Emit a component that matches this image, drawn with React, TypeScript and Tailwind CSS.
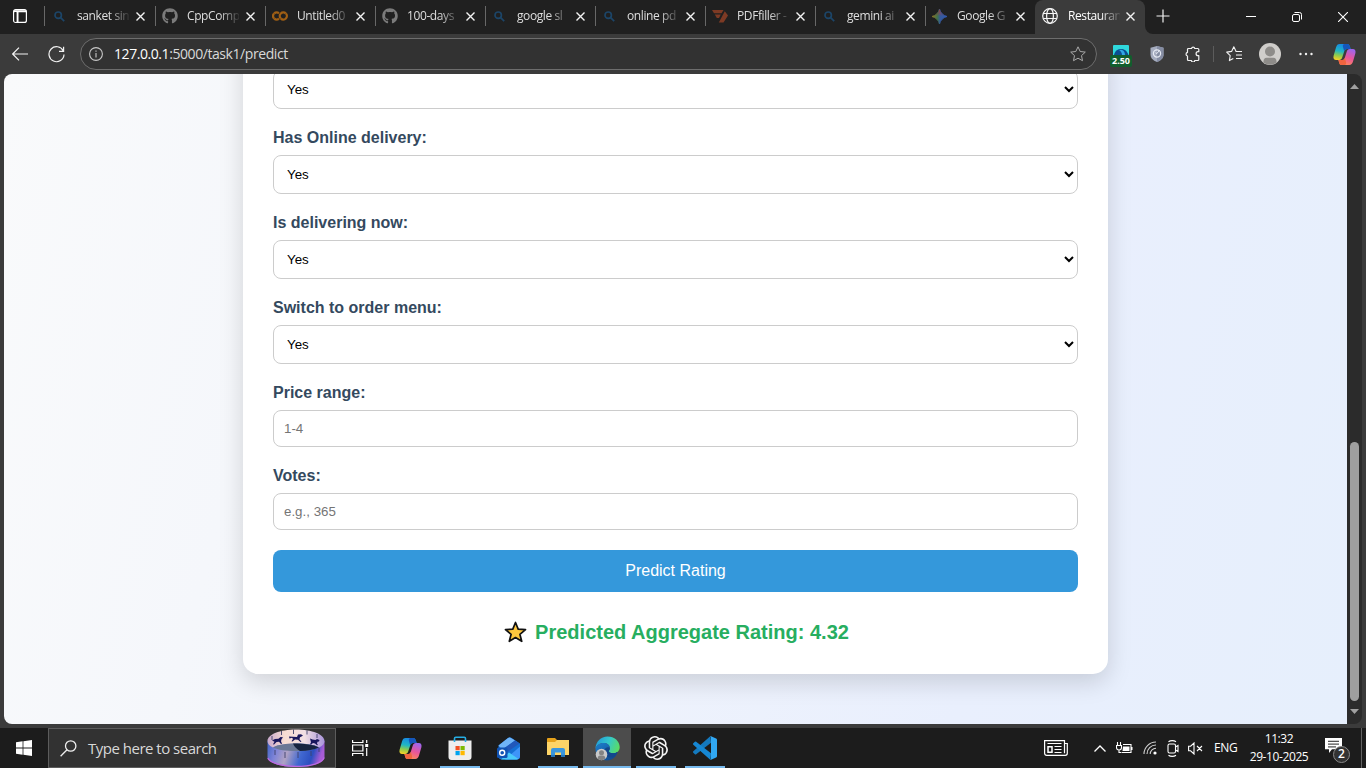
import type { ReactNode } from "react";
import { FaGithub } from "react-icons/fa";
import { SiGooglecolab, SiOpenai } from "react-icons/si";

const ui = "font-['Open_Sans','Noto_Sans',sans-serif]";

function CloseX() {
  return (
    <svg width="9" height="9" viewBox="0 0 9 9" stroke="#f2f2f2" strokeWidth="1.4" fill="none">
      <path d="M.5.5l8 8M8.5.5l-8 8" />
    </svg>
  );
}

function BingSearch() {
  return (
    <svg width="11" height="11" viewBox="0 0 11 11" fill="none" stroke="#1c4568" strokeWidth="1.7">
      <circle cx="4.2" cy="4.2" r="3.2" />
      <path d="M6.6 6.6l3.6 3.6" />
    </svg>
  );
}

function PdfFiller() {
  return (
    <svg width="16" height="13" viewBox="0 0 16 13" fill="#7d3a24">
      <path d="M0 0h11.5L9.6 3.3H2zM2.8 4.6h6L7 7.9H4.8zM12.8 1.2L16 5.6 11.5 12.6H6.8z" />
    </svg>
  );
}

function GeminiStar() {
  return (
    <svg width="15" height="15" viewBox="0 0 16 16">
      <defs>
        <linearGradient id="gem" x1="0" y1="0.5" x2="1" y2="0.5">
          <stop offset="0" stopColor="#8d7424" />
          <stop offset="0.35" stopColor="#427349" />
          <stop offset="0.55" stopColor="#34599b" />
          <stop offset="1" stopColor="#3159b2" />
        </linearGradient>
        <linearGradient id="gem2" x1="0" y1="0" x2="0" y2="1">
          <stop offset="0" stopColor="#a43b35" />
          <stop offset="0.48" stopColor="#a43b35" stopOpacity="0" />
        </linearGradient>
      </defs>
      <path d="M8 0c.9 4 4 7.100 8 8-4 .9-7.100 4-8 8-.9-4-4-7.100-8-8 4-.9 7.100-4 8-8z" fill="url(#gem)" stroke="url(#gem)" />
      <path d="M8 0c.9 4 4 7.100 8 8-4 .9-7.100 4-8 8-.9-4-4-7.100-8-8 4-.9 7.100-4 8-8z" fill="url(#gem2)" />
    </svg>
  );
}

function Globe() {
  return (
    <svg width="16" height="16" viewBox="0 0 16 16" fill="none" stroke="#f5f5f5" strokeWidth="1.2">
      <circle cx="8" cy="8" r="7.3" />
      <ellipse cx="8" cy="8" rx="3.4" ry="7.3" />
      <path d="M1.300 5.500h13.400M1.300 10.500h13.400" />
    </svg>
  );
}

const tabs: { title: string; icon: ReactNode }[] = [
  { title: "sanket sin", icon: <BingSearch /> },
  { title: "CppComp", icon: <FaGithub size={16} color="#7b7b7b" /> },
  { title: "Untitled0", icon: <SiGooglecolab size={16} color="#a05f14" /> },
  { title: "100-days", icon: <FaGithub size={16} color="#7b7b7b" /> },
  { title: "google sl", icon: <BingSearch /> },
  { title: "online pd", icon: <BingSearch /> },
  { title: "PDFfiller -", icon: <PdfFiller /> },
  { title: "gemini ai", icon: <BingSearch /> },
  { title: "Google G", icon: <GeminiStar /> },
];

function TabTitle({ children, bright = false }: { children: ReactNode; bright?: boolean }) {
  return (
    <span className={`block w-[52px] whitespace-nowrap text-[12px] leading-4 tracking-[-0.4px] [mask-image:linear-gradient(to_right,black_62%,transparent_104%)] ${bright ? "ml-[10px] text-white" : "ml-[9px] text-[#dedede]"}`}>
      {children}
    </span>
  );
}

function TabStrip() {
  return (
    <div className="flex h-[34px] shrink-0 bg-[#202020]">
      <div className="flex w-11 items-center pl-[13px] pb-[2px]">
        <svg width="14" height="14" viewBox="0 0 14 14" fill="none" stroke="#fff" strokeWidth="1.2">
          <rect x=".6" y=".6" width="12.800" height="12.800" rx="2" />
          <path d="M1 2.300h12M4.500 3v10" strokeWidth="2" />
          <path d="M2.500 3v10" stroke="#202020" strokeWidth="1.500" />
        </svg>
      </div>
      {tabs.map((t, i) => (
        <div key={i} className={i === 0 ? "flex w-[111px] items-center pb-[2px]" : "flex w-[110px] items-center pb-[2px]"}>
          <div className="h-5 w-px bg-[#686868]" />
          <div className={i === 0 ? "ml-[6px] flex w-[17px] justify-center" : "ml-[5px] flex w-[17px] justify-center"}>{t.icon}</div>
          <TabTitle>{t.title}</TabTitle>
          <div className="ml-[7px]"><CloseX /></div>
        </div>
      ))}
      <div className="flex h-full w-[110px] items-center rounded-t-[8px] bg-[#3b3b3b] pb-[2px] pl-[7px]">
        <Globe />
        <TabTitle bright>Restauran</TabTitle>
        <div className="ml-[6px]"><CloseX /></div>
      </div>
      <svg width="8" height="8" className="self-end" viewBox="0 0 8 8"><path d="M0 0v8h8a8 8 0 0 1-8-8z" fill="#3b3b3b" /></svg>
      <div className="flex flex-1 items-center justify-between pl-[3px] pr-[18px]">
        <svg width="14" height="14" className="mb-[3px]" viewBox="0 0 14 14" stroke="#f2f2f2" strokeWidth="1.200"><path d="M.5 7h13M7 .5v13" /></svg>
        <div className="flex items-center gap-[36px]">
          <svg width="10" height="10" viewBox="0 0 10 10" stroke="#fff"><path d="M0 4.500h10" /></svg>
          <svg width="10" height="10" viewBox="0 0 10 10" fill="none" stroke="#fff"><rect x=".5" y="2.500" width="7" height="7" rx="1.500" /><path d="M2.500.5h5a2 2 0 0 1 2 2v5" /></svg>
          <svg width="10" height="10" viewBox="0 0 10 10" stroke="#fff" strokeWidth="1.100"><path d="M0 0l10 10M10 0L0 10" /></svg>
        </div>
      </div>
    </div>
  );
}

function CopilotLogo({ id }: { id: string }) {
  return (
    <svg width="23" height="21" viewBox="0 0 23 21">
      <defs>
        <linearGradient id={id + "a"} x1="0.5" y1="0" x2="0.3" y2="1">
          <stop offset="0" stopColor="#1788e4" />
          <stop offset="0.45" stopColor="#20b6c4" />
          <stop offset="0.72" stopColor="#8bcb50" />
          <stop offset="1" stopColor="#f4d126" />
        </linearGradient>
        <linearGradient id={id + "b"} x1="0.7" y1="0" x2="0.3" y2="1">
          <stop offset="0" stopColor="#9d65ec" />
          <stop offset="0.5" stopColor="#e9559b" />
          <stop offset="1" stopColor="#ff8a55" />
        </linearGradient>
      </defs>
      <path d="M11 0h3.500c1.300 0 1.900 1 2.300 2.300l.8 2.800H14c-1.600 0-2.400 1-2.900 2.600L9.300 13.300C8.700 15 7.800 16 6.200 16H3.300C.8 16 0 14 .6 11.700L3 3.400C3.700 1.100 4.700 0 6.700 0z" fill={`url(#${id}a)`} />
      <path d="M11 0h3.500c1.300 0 1.900 1 2.300 2.300l.8 2.800H14c-1.500 0-2.300.8-2.800 2.200L10 3C9.600 1.500 10 .4 11 0z" fill="#1556bb" />
      <path d="M12 21H8.500c-1.300 0-1.900-1-2.300-2.300L5.400 16H9c1.600 0 2.400-1 2.900-2.600l1.800-5.700C14.300 6 15.200 5 16.800 5h2.900c2.500 0 3.300 2 2.700 4.300L20 17.600c-.7 2.300-1.700 3.400-3.700 3.400z" fill={`url(#${id}b)`} />
      <path d="M12 21H8.500c-1.300 0-1.900-1-2.300-2.300L5.400 16H9c1.500 0 2.300-.8 2.800-2.200L13 18c.4 1.500 0 2.600-1 3z" fill="#f0643f" />
    </svg>
  );
}

function Toolbar() {
  return (
    <div className="flex h-10 shrink-0 items-center bg-[#3b3b3b] pl-[12px]">
      <svg width="16" height="14" viewBox="0 0 16 14" fill="none" stroke="#f2f2f2" strokeWidth="1.200"><path d="M16 7H.8M7 .6L.7 7 7 13.400" /></svg>
      <svg width="17" height="17" className="ml-[20px]" viewBox="0 0 17 17" fill="none" stroke="#f2f2f2" strokeWidth="1.200"><path d="M15.300 5A7.500 7.500 0 1 0 16 8.500M15.600 .8v4.500H11" /></svg>
      <div className="ml-[15px] flex h-8 w-[1017px] items-center rounded-full border border-[#6d6d6d] bg-[#323232] pl-[8px] pr-[10px]">
        <svg width="14" height="14" viewBox="0 0 14 14" fill="none" stroke="#c8c8c8" strokeWidth="1.100"><circle cx="7" cy="7" r="6.400" /><path d="M7 6v4.500M7 3.500v1.300" /></svg>
        <span className="ml-[11px] flex-1 whitespace-nowrap text-[14px] leading-5 tracking-[-0.43px] text-[#d9d9d9]"><span className="text-white">127.0.0.1</span>:5000/task1/predict</span>
        <svg width="16" height="16" viewBox="0 0 16 16" fill="none" stroke="#a9a9a9" strokeLinejoin="round"><path d="M8 .8l2.200 4.700 5.100.6-3.800 3.500 1 5.100L8 12.200l-4.500 2.500 1-5.100L.7 6.100l5.100-.6z" /></svg>
      </div>
      <div className="ml-[12px] flex w-[24px] flex-col items-center pt-[3px]">
        <svg width="16" height="10" viewBox="0 0 16 10"><path d="M0 1a1 1 0 0 1 1-1h14a1 1 0 0 1 1 1v9H0z" fill="#2fd8dc" /><path d="M1 10C2 5.500 5 4 8 4s6 1.500 7.500 6z" fill="#0b4f91" /><path d="M6 5c3-.8 6 1 6 5H9C9 7.500 7.500 6 6 5z" fill="#32a7e4" /></svg>
        <span className="h-[12px] w-[22px] rounded-[2px] bg-[#115e2d] text-center text-[9px] font-bold leading-[12px] text-white">2.50</span>
      </div>
      <svg width="14" height="16" className="ml-[17px]" viewBox="0 0 14 16"><path d="M7 0l6.500 1.800v7C13.500 12.500 10 15 7 16 4 15 .5 12.500.5 8.800v-7z" fill="#a4abbe" /><path d="M7 0l6.500 1.800v7C13.500 12.500 10 15 7 16z" fill="#858da3" /><circle cx="7" cy="7.500" r="3.600" fill="none" stroke="#e7ebf4" strokeWidth="1.200" /><path d="M9.500 4L7 7.500 5.500 6.800" fill="none" stroke="#e7ebf4" /></svg>
      <svg width="16" height="16" className="ml-[21px]" viewBox="0 0 16 16" fill="none" stroke="#f2f2f2" strokeWidth="1.200" strokeLinejoin="round"><path d="M3.500 2.500h3a1.700 1.700 0 0 1 3.300 0h3a1 1 0 0 1 1 1v2.200h-.7a2 2 0 0 0 0 4h.7v3.800a1 1 0 0 1-1 1H9.700a1.600 1.600 0 0 1-3.200 0h-3a1 1 0 0 1-1-1V10a1.900 1.900 0 0 1 0-3.700V3.500a1 1 0 0 1 1-1z" /></svg>
      <div className="ml-[12px] h-4 w-px bg-[#5c5c5c]" />
      <svg width="17" height="16" className="ml-[12px]" viewBox="0 0 17 16" fill="none" stroke="#f2f2f2" strokeWidth="1.100" strokeLinejoin="round"><path d="M10 5.300L7.800.8 5.600 5.400.7 6.100l3.500 3.500-.8 5 3.900-2M9.500 5.500H16M10 9h6M10 12.500h6" /></svg>
      <svg width="22" height="22" className="ml-[16px]" viewBox="0 0 22 22"><circle cx="11" cy="11" r="11" fill="#d0cecb" /><circle cx="11" cy="8.500" r="5" fill="#8e8c89" /><path d="M4.500 19.700c-.4-3 1-5 3-5h7c2 0 3.400 2 3 5A11 11 0 0 1 4.500 19.700z" fill="#8e8c89" /></svg>
      <svg width="14" height="4" className="ml-[18px]" viewBox="0 0 14 4" fill="#f2f2f2"><circle cx="1.500" cy="2" r="1.200" /><circle cx="7" cy="2" r="1.200" /><circle cx="12.500" cy="2" r="1.200" /></svg>
      <div className="ml-[20px]"><CopilotLogo id="cpt" /></div>
    </div>
  );
}

const labelCls = "block h-[46px] shrink-0 pt-[19px] text-[16px] font-bold leading-[19px] text-[#34495e]";

function YesNo() {
  return (
    <select className="block h-[39px] w-full shrink-0 rounded-[8px] border border-[#cccccc] bg-white py-[10px] pl-[9px] pr-[10px] text-[13.333px] text-black">
      <option>Yes</option>
      <option>No</option>
    </select>
  );
}

function Page() {
  return (
    <main className="flex flex-1 flex-col items-center overflow-hidden rounded-l-[8px] bg-[linear-gradient(105deg,#f9fafb_0%,#f5f7fb_22%,#e9effd_74%,#e6effc_100%)] font-['Liberation_Sans',Arial,sans-serif]">
      <form className="-mt-[34px] flex h-[634px] w-[865px] shrink-0 flex-col rounded-[15px] bg-white p-[30px] shadow-[0_8px_25px_rgba(0,0,0,0.15)]">
        <YesNo />
        <label className={labelCls}>Has Online delivery:</label>
        <YesNo />
        <label className={labelCls}>Is delivering now:</label>
        <YesNo />
        <label className={labelCls}>Switch to order menu:</label>
        <YesNo />
        <label className={labelCls}>Price range:</label>
        <input placeholder="1-4" className="h-[37px] shrink-0 rounded-[8px] border border-[#cccccc] p-[10px] text-[13.333px] placeholder:text-[#757575]" />
        <label className={labelCls}>Votes:</label>
        <input placeholder="e.g., 365" className="h-[37px] shrink-0 rounded-[8px] border border-[#cccccc] p-[10px] text-[13.333px] placeholder:text-[#757575]" />
        <button type="button" className="mt-5 h-[42px] shrink-0 rounded-[8px] bg-[#3498db] text-[16px] leading-[18px] text-white">Predict Rating</button>
        <div className="mt-[28px] flex shrink-0 items-center justify-center gap-[8px] pl-[2px] text-[20px] font-bold leading-6 text-[#27ae60]">
          <svg width="23" height="22" viewBox="0 0 23 22"><path d="M11.500 1.500l2.700 6.600 7.300.5-5.600 4.700 1.800 7-6.200-3.800-6.200 3.800 1.800-7L1.500 8.600l7.300-.5z" fill="#ffc83d" stroke="#111" strokeWidth="1.700" strokeLinejoin="round" /></svg>
          <span>Predicted Aggregate Rating: 4.32</span>
        </div>
      </form>
    </main>
  );
}

function Scrollbar() {
  return (
    <div className="flex w-[15px] flex-col items-center rounded-r-[8px] bg-[#2b2b2b] pb-[10px] pt-[10px]">
      <svg width="9" height="5" viewBox="0 0 9 5" fill="#a0a0a0"><path d="M4.500 0L9 5H0z" /></svg>
      <div className="mt-[353px] h-[259px] w-[9px] rounded-full bg-[#9f9f9f]" />
      <svg width="9" height="5" className="mt-auto" viewBox="0 0 9 5" fill="#a0a0a0"><path d="M4.500 5L9 0H0z" /></svg>
    </div>
  );
}

function Carousel() {
  return (
    <svg width="58" height="38" viewBox="0 0 58 38">
      <defs>
        <linearGradient id="drum" x1="0" x2="1" y1="0" y2="0.15">
          <stop offset="0" stopColor="#3e62c4" />
          <stop offset="0.2" stopColor="#7d83d8" />
          <stop offset="0.4" stopColor="#b0a2c4" />
          <stop offset="0.65" stopColor="#4168d0" />
          <stop offset="0.85" stopColor="#2c4fc0" />
          <stop offset="1" stopColor="#a75cd6" />
        </linearGradient>
        <linearGradient id="band" x1="0" x2="1">
          <stop offset="0" stopColor="#c8a9cc" />
          <stop offset="0.3" stopColor="#f7dcd2" />
          <stop offset="0.65" stopColor="#f1dfe4" />
          <stop offset="1" stopColor="#a994da" />
        </linearGradient>
      </defs>
      <path d="M.5 12h57v16c0 5.500-12.500 10-28.500 10S.5 33.500.5 28z" fill="url(#drum)" />
      <path d="M.8 29c2 4.500 13 8.400 28.200 8.400S55.500 34 57.200 28.500" fill="none" stroke="#bd68e1" strokeWidth="1.300" />
      <path d="M.5 12C.5 5.500 13 .5 29 .5S57.500 5.500 57.500 12c0 3-2 5-5.500 6.500-5-3-13-4-23-4s-18 1-23 4C2.500 17 .5 15 .5 12z" fill="url(#band)" />
      <path d="M6 18.500c5-3 13-4 23-4s18 1 23 4c-5 2.500-13 3.500-23 3.500S11 21 6 18.500z" fill="#6a7795" />
      <path d="M26 14.500c11 0 20 1 26 4-5 2.500-12 3.300-19 3.500-3-2-6-4-7-7.500z" fill="#16233f" />
      <path d="M26.500.5v4.500M14.500 2v4M40 1.500v4M5 7v4M50 5v4M8 21v5M18 23v6M31 23v6M44 22v5M52 19v4" stroke="#3f426b" strokeWidth=".9" />
      <g fill="#19175c">
        <path d="M22 7.500l4 .2 4 .3 1-2.500 3-.3 2 1.200-1.500 1-1.500.8-.5 2 2 2.500-1 .3-2.500-2.300-3-.2-2.500 2-1-.3 1.500-2.200-1-1.200-2.500.8z" />
        <path d="M5 11.500l3-1.500 3.500-.3 2-1.800 2.500.3-1.500 2-.5 2 1 2.500-1 .2-2-2.200-2.500.4-2.500 2.500-1-.4 1.500-2.500z" />
        <path d="M43 9.500l2.500 1 3 .5 1.500-1 2.500 1-.5 1.500-1.500.2-.5 1.800 1 1.500-1 .2-2-1.700-2-.5-2 1.700-1-.5 1-2z" />
      </g>
    </svg>
  );
}

function TaskButton({ children, open = false, active = false, wide = "w-[49px]" }: { children: ReactNode; open?: boolean; active?: boolean; wide?: string }) {
  return (
    <div className={`flex h-full flex-col items-center ${wide} ${active ? "bg-[#4c4c4c]" : ""}`}>
      <div className="flex flex-1 items-center pt-[2px]">{children}</div>
      <div className={`h-[2px] ${active ? "w-full" : "w-10"} ${open || active ? "bg-[#76b9ed]" : ""}`} />
    </div>
  );
}

function StoreIcon() {
  return (
    <svg width="24" height="24" viewBox="0 0 24 24">
      <path d="M.5 4.500h23V21a3 3 0 0 1-3 3h-17a3 3 0 0 1-3-3z" fill="#eeeeee" />
      <path d="M6.500 6V2.500A1.200 1.200 0 0 1 7.700 1.300h8.600a1.200 1.200 0 0 1 1.200 1.200V6" fill="none" stroke="#26aee4" strokeWidth="1.600" />
      <path d="M7.500 10h4.200v4.200H7.500z" fill="#f25022" /><path d="M12.500 10h4.200v4.200h-4.200z" fill="#7fba00" /><path d="M7.500 15h4.200v4.200H7.500z" fill="#00a4ef" /><path d="M12.500 15h4.200v4.200h-4.200z" fill="#ffb900" />
    </svg>
  );
}

function OutlookIcon() {
  return (
    <svg width="24" height="23" viewBox="0 0 24 23">
      <path d="M1.500 8.500L11 1a3 3 0 0 1 3.600 0L23 6.500V19a3.500 3.500 0 0 1-3.500 3.500H5A3.500 3.500 0 0 1 1.500 19z" fill="#1570d4" />
      <path d="M1.500 8.500L11 1a3 3 0 0 1 3 0l4 2.500L5 13z" fill="#6fb4f8" /><path d="M6 12l12-8.500L22.500 6.500 9 16z" fill="#2158ba" />
      <path d="M8 22.500l15-13v9.500a3.500 3.500 0 0 1-3.500 3.500z" fill="#3e94f8" /><path d="M4 22.400l8-7 9.500 6.500-2 .6H5z" fill="#48cafa" />
      <rect y="10.500" width="10.500" height="10.500" rx="1.500" fill="#1053b4" /><circle cx="5.200" cy="15.700" r="2.500" fill="none" stroke="#fff" strokeWidth="1.400" />
    </svg>
  );
}

function ExplorerIcon() {
  return (
    <svg width="22" height="19" viewBox="0 0 22 19">
      <path d="M0 1a1 1 0 0 1 1-1h7l2 2h11a1 1 0 0 1 1 1v14H0z" fill="#e6a21b" /><path d="M0 4h8l2-2h12v15H0z" fill="#fdd467" />
      <path d="M4 19v-7a2 2 0 0 1 2-2h10a2 2 0 0 1 2 2v7h-4v-4.500H8V19z" fill="#3a96dd" /><path d="M4 17h4v2H4zM14 17h4v2h-4z" fill="#2475b9" />
    </svg>
  );
}

function EdgeIcon() {
  return (
    <svg width="25" height="25" viewBox="0 0 25 25">
      <defs>
        <linearGradient id="edgeTop" x1="0" x2="1" y1="0.3" y2="0.6"><stop offset="0" stopColor="#229bd8" /><stop offset="0.5" stopColor="#34c8cb" /><stop offset="1" stopColor="#5bdc62" /></linearGradient>
        <linearGradient id="edgeLow" x1="0" x2="0.7" y1="0" y2="1"><stop offset="0" stopColor="#1b80cf" /><stop offset="1" stopColor="#124a8d" /></linearGradient>
      </defs>
      <path d="M.5 13C.5 5.500 6 .5 12.500.5 19.500.5 24.700 5.300 24.700 11c0 4-3 6.300-6.500 6.300-2.800 0-4.600-1-4.600-2 0-.8 1.200-1.200 1.200-3.300C14.800 9 12 7 8.700 7 4.500 7 1.500 9.500.5 13z" fill="url(#edgeTop)" />
      <path d="M.5 13C1.300 9 4.500 7 8.700 7c3.300 0 6.300 2 6.100 5-.1 2.100-1.200 2.500-1.200 3.300 0 1 1.800 2 4.600 2 1.500 0 3-.4 4.300-1.200-1.500 5-5.200 8.400-10.200 8.400C5.500 24.500.3 19.500.5 13z" fill="url(#edgeLow)" />
      <path d="M14.800 12c-1-1.300-5.300-1-5.800 3.500-.4 4 4 7.500 10.500 5.500 1.400-1.200 2.300-2.700 3-4.900-1.300.8-2.800 1.200-4.300 1.200-2.800 0-4.600-1-4.600-2 0-.8 1.100-1.200 1.200-3.300z" fill="#12488c" />
      <circle cx="6.500" cy="18.500" r="5.800" fill="#c9c9c9" /><circle cx="6.500" cy="16.700" r="2.500" fill="#838383" /><path d="M2.700 22.500c0-2 1-3 2.500-3h2.600c1.500 0 2.500 1 2.500 3a5.800 5.800 0 0 1-7.600 0z" fill="#838383" />
    </svg>
  );
}

function VsCodeIcon() {
  return (
    <svg width="24" height="24" viewBox="0 0 24 24">
      <path d="M17.500 0L18 6.800 3.200 18.200a1 1 0 0 1-1.300 0L.3 16.700a1 1 0 0 1 0-1.400z" fill="#1479be" />
      <path d="M17.500 24L18 17.200 3.200 5.800a1 1 0 0 0-1.300 0L.3 7.300a1 1 0 0 0 0 1.400z" fill="#1687d3" />
      <path d="M17.500 24c-.6-.3.500-.3.500-1.500v-21C18 .3 17 .3 17.500 0l5.600 2.400a1.500 1.500 0 0 1 .9 1.400v16.400a1.500 1.500 0 0 1-.9 1.400z" fill="#31a8f3" />
    </svg>
  );
}

function Taskbar() {
  return (
    <footer className="flex h-10 shrink-0 bg-[#1c1c1c] text-white">
      <div className="flex w-12 items-center justify-center">
        <svg width="16" height="16" viewBox="0 0 16 16" fill="#fff"><path d="M0 2.200L6.600 1.300v6.300H0zM7.400 1.200L16 0v7.600H7.400zM0 8.400h6.600v6.300L0 13.800zM7.400 8.400H16V16l-8.600-1.200z" /></svg>
      </div>
      <div className="flex w-[288px] items-center border border-[#5c5c5c] bg-[#323232] pl-[11px]">
        <svg width="17" height="17" viewBox="0 0 17 17" fill="none" stroke="#efefef" strokeWidth="1.300"><circle cx="10.700" cy="6" r="5.200" /><path d="M7 9.800L.6 16.300" /></svg>
        <span className="ml-[11px] w-[179px] whitespace-nowrap text-[15px] leading-5 tracking-[-0.5px] text-[#d8d8d8]">Type here to search</span>
        <Carousel />
      </div>
      <TaskButton wide="w-12">
        <svg width="17" height="16" viewBox="0 0 17 16" fill="none" stroke="#fff" strokeWidth="1.200"><path d="M.6 0v2.500h10.300V0M.6 16v-2.500h10.300V16M.6 5h10.300v6H.6zM14.700 0v3M14.700 8v8" /><path d="M13.200 4h3v3h-3z" fill="#fff" stroke="none" /></svg>
      </TaskButton>
      <TaskButton wide="w-[53px]"><CopilotLogo id="task" /></TaskButton>
      <TaskButton open wide="w-[46px]"><StoreIcon /></TaskButton>
      <TaskButton wide="w-[51px]"><OutlookIcon /></TaskButton>
      <TaskButton open wide="w-[48px]"><div className="pb-px"><ExplorerIcon /></div></TaskButton>
      <div className="w-px" />
      <TaskButton active wide="w-12"><EdgeIcon /></TaskButton>
      <TaskButton open wide="w-[50px]"><SiOpenai size={24} color="#f4f4f4" /></TaskButton>
      <TaskButton open wide="w-[48px]"><VsCodeIcon /></TaskButton>
      <div className="ml-auto flex items-center">
        <svg width="24" height="16" viewBox="0 0 24 16" fill="none" stroke="#fff" strokeWidth="1.200"><path d="M20.500 3.500h2.800v9.800a2 2 0 0 1-2 2H2.600a2 2 0 0 1-2-2V.6h19.900v12.700M3.500 3.500h14M10.500 6.500h7M10.500 9.500h7M10.500 12.500h7" /><path d="M4 6.700h4v5.500H4z" strokeWidth="1.500" /></svg>
        <svg width="12" height="7" className="ml-[26px]" viewBox="0 0 12 7" fill="none" stroke="#fff" strokeWidth="1.300"><path d="M.5 6.500L6 1l5.500 5.500" /></svg>
        <svg width="17" height="13" className="ml-[10px]" viewBox="0 0 17 13" fill="none" stroke="#fff"><path d="M1.500 0v3M4.500 0v3M.5 3.500h5v2a2.500 2.500 0 0 1-5 0zM3 8v2.500h2M7 2.500h8v8H5.500" strokeWidth="1.100" /><path d="M7 4.500h6.500v4.500h-7zM15 5h1.500v3H15z" fill="#fff" stroke="none" /></svg>
        <svg width="14" height="14" className="ml-[10px]" viewBox="0 0 14 14" fill="none" stroke="#eee" strokeWidth="1.100"><path d="M1 13A12 12 0 0 1 13 1M4 13a9 9 0 0 1 9-9M7.200 13A6 6 0 0 1 13 7.200" opacity=".85" /><circle cx="12" cy="12" r="1.600" fill="#fff" stroke="none" /></svg>
        <svg width="12" height="17" className="ml-[10px]" viewBox="0 0 12 17" fill="none" stroke="#fff" strokeWidth="1.100"><rect x="1" y="4" width="7.500" height="9" rx="1.500" /><path d="M8.500 7l2.500-1.500v6L8.500 10M1.500 1.800C3.500.2 7 .2 9 1.800M1.500 15.200c2 1.600 5.500 1.600 7.500 0" /></svg>
        <svg width="15" height="13" className="ml-[9px]" viewBox="0 0 15 13" fill="none" stroke="#fff" strokeWidth="1.100"><path d="M.6 4.200h2L6 1v11L2.600 8.800h-2zM9 4l5 5M14 4L9 9" /></svg>
        <span className="ml-[11px] w-[24px] whitespace-nowrap text-[12px] leading-4 tracking-[-0.35px]">ENG</span>
        <div className="ml-[11px] flex w-[60px] flex-col items-center whitespace-nowrap text-[12px] leading-[18px] tracking-[-0.4px]">
          <span>11:32</span>
          <span>29-10-2025</span>
        </div>
        <div className="relative ml-[16px] mr-[12px] mt-[5px] h-[26px] w-[24px]">
          <svg width="17" height="15" viewBox="0 0 17 16" fill="#fff" preserveAspectRatio="none"><path d="M0 0h17v12H7l-3 4v-4H0z" /><path d="M3 3.500h11M3 6.500h11M3 9.500h8" stroke="#1c1c1c" /></svg>
          <span className="absolute left-[8px] top-[8px] flex h-[17px] w-[17px] items-center justify-center rounded-full border border-[#8a8a8a] bg-[#333] text-[12px] font-semibold leading-none">2</span>
        </div>
        <div className="mr-1 h-10 w-px bg-[#626262]" />
      </div>
    </footer>
  );
}

export default function App() {
  return (
    <div className={`flex h-[768px] w-[1366px] flex-col overflow-hidden bg-[#3b3b3b] ${ui}`}>
      <TabStrip />
      <Toolbar />
      <div className="flex h-[650px] shrink-0 pl-1 pr-1">
        <Page />
        <Scrollbar />
      </div>
      <div className="h-1 shrink-0" />
      <Taskbar />
    </div>
  );
}
